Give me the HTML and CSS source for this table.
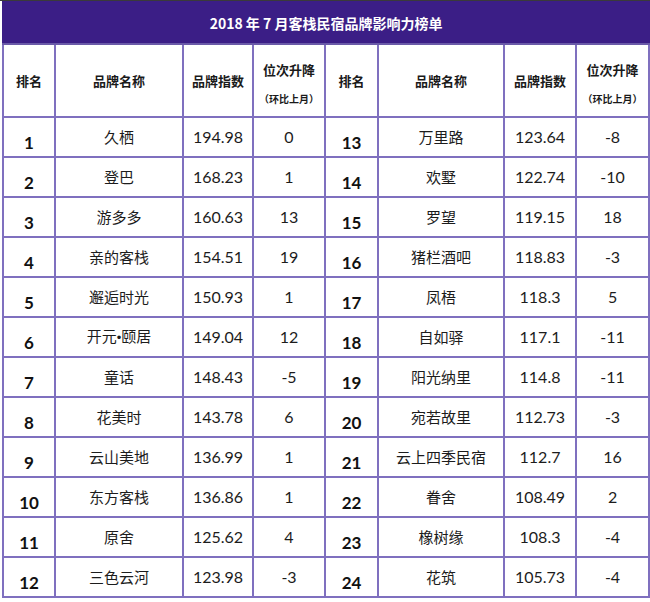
FILE: index.html
```html
<!DOCTYPE html>
<html lang="zh-CN">
<head>
<meta charset="utf-8">
<title>2018 年 7 月客栈民宿品牌影响力榜单</title>
<link rel="stylesheet" href="styles.css">
</head>
<body>
<div class="page">
<table class="rank">
<colgroup>
<col class="c1"><col class="c2"><col class="c3"><col class="c4">
<col class="c5"><col class="c6"><col class="c7"><col class="c8">
</colgroup>
<thead>
<tr class="title"><th colspan="8">2018 年 7 月客栈民宿品牌影响力榜单</th></tr>
<tr class="head">
<th>排名</th><th>品牌名称</th><th>品牌指数</th><th><div class="h1">位次升降</div><div class="h2">（环比上月）</div></th>
<th>排名</th><th>品牌名称</th><th>品牌指数</th><th><div class="h1">位次升降</div><div class="h2">（环比上月）</div></th>
</tr>
</thead>
<tbody>
<tr><td class="no">1</td><td>久栖</td><td class="num">194.98</td><td class="num">0</td><td class="no">13</td><td>万里路</td><td class="num">123.64</td><td class="num">-8</td></tr>
<tr><td class="no">2</td><td>登巴</td><td class="num">168.23</td><td class="num">1</td><td class="no">14</td><td>欢墅</td><td class="num">122.74</td><td class="num">-10</td></tr>
<tr><td class="no">3</td><td>游多多</td><td class="num">160.63</td><td class="num">13</td><td class="no">15</td><td>罗望</td><td class="num">119.15</td><td class="num">18</td></tr>
<tr><td class="no">4</td><td>亲的客栈</td><td class="num">154.51</td><td class="num">19</td><td class="no">16</td><td>猪栏酒吧</td><td class="num">118.83</td><td class="num">-3</td></tr>
<tr><td class="no">5</td><td>邂逅时光</td><td class="num">150.93</td><td class="num">1</td><td class="no">17</td><td>凤梧</td><td class="num">118.3</td><td class="num">5</td></tr>
<tr><td class="no">6</td><td>开元<span class="dot">•</span>颐居</td><td class="num">149.04</td><td class="num">12</td><td class="no">18</td><td>自如驿</td><td class="num">117.1</td><td class="num">-11</td></tr>
<tr><td class="no">7</td><td>童话</td><td class="num">148.43</td><td class="num">-5</td><td class="no">19</td><td>阳光纳里</td><td class="num">114.8</td><td class="num">-11</td></tr>
<tr><td class="no">8</td><td>花美时</td><td class="num">143.78</td><td class="num">6</td><td class="no">20</td><td>宛若故里</td><td class="num">112.73</td><td class="num">-3</td></tr>
<tr><td class="no">9</td><td>云山美地</td><td class="num">136.99</td><td class="num">1</td><td class="no">21</td><td>云上四季民宿</td><td class="num">112.7</td><td class="num">16</td></tr>
<tr><td class="no">10</td><td>东方客栈</td><td class="num">136.86</td><td class="num">1</td><td class="no">22</td><td>眷舍</td><td class="num">108.49</td><td class="num">2</td></tr>
<tr><td class="no">11</td><td>原舍</td><td class="num">125.62</td><td class="num">4</td><td class="no">23</td><td>橡树缘</td><td class="num">108.3</td><td class="num">-4</td></tr>
<tr><td class="no">12</td><td>三色云河</td><td class="num">123.98</td><td class="num">-3</td><td class="no">24</td><td>花筑</td><td class="num">105.73</td><td class="num">-4</td></tr>
</tbody>
</table>
</div>
</body>
</html>
```
FILE: styles.css
```css
html, body {
  margin: 0;
  padding: 0;
  background: #ffffff;
}
.page {
  padding: 0 0 0 2px;
  border-top: 1px solid #3a3a3a;
  width: 650px;
  box-sizing: border-box;
}
.rank {
  border-collapse: collapse;
  table-layout: fixed;
  width: 646px;
  font-family: "Noto Sans CJK SC", "Noto Sans", sans-serif;
  color: #1c1c1c;
}
.c1 { width: 52px; }
.c2 { width: 128px; }
.c3 { width: 70px; }
.c4 { width: 72px; }
.c5 { width: 53px; }
.c6 { width: 126px; }
.c7 { width: 72px; }
.c8 { width: 73px; }
.rank th, .rank td {
  border: 2px solid #7f70bf;
  padding: 0;
  text-align: center;
  vertical-align: middle;
}
.title th {
  background: #3b1e86;
  color: #ffffff;
  height: 40px;
  font-size: 14px;
  font-weight: bold;
  border-color: #3b1e86;
  border-bottom-color: #6a5aa8;
}
.head th {
  height: 71px;
  font-size: 13px;
  font-weight: bold;
  color: #1a1a1a;
}
.h1 {
  line-height: 18px;
  margin-top: 5px;
}
.h2 {
  font-size: 10px;
  line-height: 12px;
  margin-top: 14px;
}
.rank tbody tr {
  height: 40px;
}
.rank td {
  font-size: 15px;
  line-height: 20px;
}
.rank td.no {
  font-family: "Lato", "Noto Sans", sans-serif;
  font-weight: bold;
  font-size: 17px;
  line-height: 22px;
  vertical-align: bottom;
  padding-bottom: 2px;
  color: #111111;
}
.rank td.num {
  font-family: "Lato", "Noto Sans", sans-serif;
  font-size: 16px;
}
.dot {
  font-family: "Liberation Sans", sans-serif;
  font-size: 13px;
}
```
